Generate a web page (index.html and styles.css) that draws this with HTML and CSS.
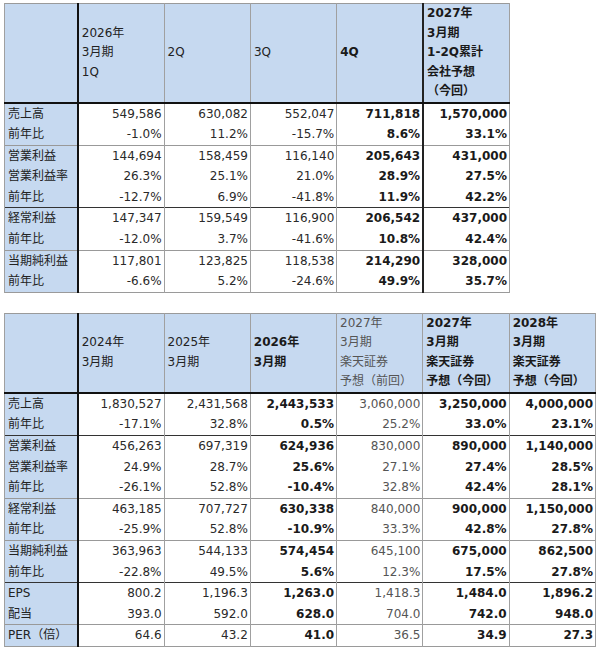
FILE: index.html
```html
<!DOCTYPE html>
<html lang="ja">
<head>
<meta charset="utf-8">
<title>業績予想</title>
<link rel="stylesheet" href="styles.css">
</head>
<body>
<div class="page">
<table class="fin t1">
  <colgroup>
    <col class="c-label"><col class="c-num"><col class="c-num"><col class="c-num"><col class="c-num"><col class="c-num">
  </colgroup>
  <thead>
    <tr class="head head1">
      <th class="label"></th>
      <th>2026年<br>3月期<br>1Q</th>
      <th>2Q</th>
      <th>3Q</th>
      <th class="b dl">4Q</th>
      <th class="b dk">2027年<br>3月期<br>1-2Q累計<br>会社予想<br>（今回）</th>
    </tr>
  </thead>
  <tbody>
    <tr><td class="label">売上高</td><td>549,586</td><td>630,082</td><td>552,047</td><td class="b dl">711,818</td><td class="b dk">1,570,000</td></tr>
    <tr><td class="label">前年比</td><td>-1.0%</td><td>11.2%</td><td>-15.7%</td><td class="b dl">8.6%</td><td class="b dk">33.1%</td></tr>
    <tr class="sep"><td class="label">営業利益</td><td>144,694</td><td>158,459</td><td>116,140</td><td class="b dl">205,643</td><td class="b dk">431,000</td></tr>
    <tr><td class="label">営業利益率</td><td>26.3%</td><td>25.1%</td><td>21.0%</td><td class="b dl">28.9%</td><td class="b dk">27.5%</td></tr>
    <tr><td class="label">前年比</td><td>-12.7%</td><td>6.9%</td><td>-41.8%</td><td class="b dl">11.9%</td><td class="b dk">42.2%</td></tr>
    <tr class="sep dark"><td class="label">経常利益</td><td>147,347</td><td>159,549</td><td>116,900</td><td class="b dl">206,542</td><td class="b dk">437,000</td></tr>
    <tr><td class="label">前年比</td><td>-12.0%</td><td>3.7%</td><td>-41.6%</td><td class="b dl">10.8%</td><td class="b dk">42.4%</td></tr>
    <tr class="sep"><td class="label">当期純利益</td><td>117,801</td><td>123,825</td><td>118,538</td><td class="b dl">214,290</td><td class="b dk">328,000</td></tr>
    <tr><td class="label">前年比</td><td>-6.6%</td><td>5.2%</td><td>-24.6%</td><td class="b dl">49.9%</td><td class="b dk">35.7%</td></tr>
  </tbody>
</table>

<table class="fin t2">
  <colgroup>
    <col class="c-label"><col class="c-num"><col class="c-num"><col class="c-num"><col class="c-num"><col class="c-num"><col class="c-num">
  </colgroup>
  <thead>
    <tr class="head head2">
      <th class="label"></th>
      <th>2024年<br>3月期</th>
      <th>2025年<br>3月期</th>
      <th class="b">2026年<br>3月期</th>
      <th class="prev dl">2027年<br>3月期<br>楽天証券<br>予想（前回）</th>
      <th class="b dl">2027年<br>3月期<br>楽天証券<br>予想（今回）</th>
      <th class="b">2028年<br>3月期<br>楽天証券<br>予想（今回）</th>
    </tr>
  </thead>
  <tbody>
    <tr><td class="label">売上高</td><td>1,830,527</td><td>2,431,568</td><td class="b">2,443,533</td><td class="prev dl">3,060,000</td><td class="b dl">3,250,000</td><td class="b">4,000,000</td></tr>
    <tr><td class="label">前年比</td><td>-17.1%</td><td>32.8%</td><td class="b">0.5%</td><td class="prev dl">25.2%</td><td class="b dl">33.0%</td><td class="b">23.1%</td></tr>
    <tr class="sep dark"><td class="label">営業利益</td><td>456,263</td><td>697,319</td><td class="b">624,936</td><td class="prev dl">830,000</td><td class="b dl">890,000</td><td class="b">1,140,000</td></tr>
    <tr><td class="label">営業利益率</td><td>24.9%</td><td>28.7%</td><td class="b">25.6%</td><td class="prev dl">27.1%</td><td class="b dl">27.4%</td><td class="b">28.5%</td></tr>
    <tr><td class="label">前年比</td><td>-26.1%</td><td>52.8%</td><td class="b">-10.4%</td><td class="prev dl">32.8%</td><td class="b dl">42.4%</td><td class="b">28.1%</td></tr>
    <tr class="sep"><td class="label">経常利益</td><td>463,185</td><td>707,727</td><td class="b">630,338</td><td class="prev dl">840,000</td><td class="b dl">900,000</td><td class="b">1,150,000</td></tr>
    <tr><td class="label">前年比</td><td>-25.9%</td><td>52.8%</td><td class="b">-10.9%</td><td class="prev dl">33.3%</td><td class="b dl">42.8%</td><td class="b">27.8%</td></tr>
    <tr class="sep"><td class="label">当期純利益</td><td>363,963</td><td>544,133</td><td class="b">574,454</td><td class="prev dl">645,100</td><td class="b dl">675,000</td><td class="b">862,500</td></tr>
    <tr><td class="label">前年比</td><td>-22.8%</td><td>49.5%</td><td class="b">5.6%</td><td class="prev dl">12.3%</td><td class="b dl">17.5%</td><td class="b">27.8%</td></tr>
    <tr class="sep dark"><td class="label">EPS</td><td>800.2</td><td>1,196.3</td><td class="b">1,263.0</td><td class="prev dl">1,418.3</td><td class="b dl">1,484.0</td><td class="b">1,896.2</td></tr>
    <tr><td class="label">配当</td><td>393.0</td><td>592.0</td><td class="b">628.0</td><td class="prev dl">704.0</td><td class="b dl">742.0</td><td class="b">948.0</td></tr>
    <tr class="sep"><td class="label">PER（倍）</td><td>64.6</td><td>43.2</td><td class="b">41.0</td><td class="prev dl">36.5</td><td class="b dl">34.9</td><td class="b">27.3</td></tr>
  </tbody>
</table>
</div>
</body>
</html>
```

FILE: styles.css
```css
html, body {
  margin: 0;
  padding: 0;
  background: #ffffff;
}

.page {
  padding: 3px 0 0 4px;
  display: flex;
  flex-direction: column;
  align-items: flex-start;
  gap: 20px;
}

.fin {
  border-collapse: collapse;
  table-layout: fixed;
  font-family: "DejaVu Sans", "Noto Sans CJK JP", sans-serif;
  font-size: 12px;
  color: #2a2a2a;
  border: 1px solid #9a9a9a;
}

.t1 { width: 506px; }
.t2 { width: 592px; }

.c-label { width: 73px; }
.c-num { width: 86px; }

.fin th,
.fin td {
  border-left: 1px solid #a0a0a0;
  border-right: 1px solid #a0a0a0;
  padding: 0 2px 0 3px;
  white-space: nowrap;
  overflow: hidden;
}

.fin th {
  background: #c6d9f0;
  text-align: left;
  font-weight: normal;
  vertical-align: middle;
  line-height: 19.5px;
  border-bottom: 2px solid #111;
  color: #222;
}

.head1 { height: 95px; }
.head2 { height: 74px; }

.fin td {
  height: 20.6px;
  line-height: 20.6px;
  text-align: right;
  padding-top: 0;
  padding-bottom: 0;
}

.fin td.label,
.fin th.label {
  background: #c6d9f0;
  text-align: left;
  border-right: 2px solid #111;
  color: #222;
  padding-left: 3px;
}

.fin .b {
  font-weight: bold;
  color: #1a1a1a;
}

.fin .prev {
  color: #555555;
}

.fin .dl {
  border-left: 1px solid #555;
}

.fin .dk {
  border-left: 2px solid #222;
}

.fin tr.sep td {
  border-top: 1px solid #999;
}

.fin tr.sep.dark td {
  border-top: 1px solid #333;
}
```
